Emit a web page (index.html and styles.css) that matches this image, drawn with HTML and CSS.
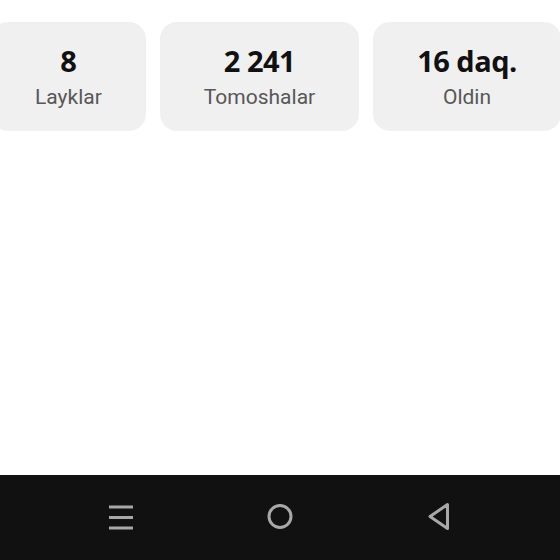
FILE: index.html
```html
<!DOCTYPE html>
<html>
<head>
<meta charset="utf-8">
<link rel="stylesheet" href="styles.css">
</head>
<body>
<div class="screen">
  <div class="stats">
    <div class="card"><div class="num">8</div><div class="label">Layklar</div></div>
    <div class="card"><div class="num">2 241</div><div class="label">Tomoshalar</div></div>
    <div class="card"><div class="num">16 daq.</div><div class="label">Oldin</div></div>
  </div>
  <div class="spacer"></div>
  <div class="navbar">
    <svg class="ico" width="30" height="30" viewBox="0 0 30 30"><g stroke="#a8a8a8" stroke-width="3"><line x1="3" y1="6" x2="27" y2="6"/><line x1="3" y1="16.5" x2="27" y2="16.5"/><line x1="3" y1="27" x2="27" y2="27"/></g></svg>
    <svg class="ico" width="30" height="30" viewBox="0 0 30 30"><circle cx="15" cy="15.5" r="11" fill="none" stroke="#a8a8a8" stroke-width="3"/></svg>
    <svg class="ico" width="30" height="30" viewBox="0 0 30 30"><path d="M23.5 3.5 L23.5 27.5 L6 15.5 Z" fill="none" stroke="#a8a8a8" stroke-width="3" stroke-linejoin="round"/></svg>
  </div>
</div>
</body>
</html>
```
FILE: styles.css
```css
html, body { margin: 0; padding: 0; background: #fff; }
.screen { width: 560px; height: 560px; display: flex; flex-direction: column; overflow: hidden; }
.stats { display: flex; gap: 14px; margin-top: 22px; margin-left: -9px; }
.card { flex: none; background: #f0f0f0; border-radius: 17px; height: 109px; padding: 21px 44px 0; box-sizing: border-box; display: flex; flex-direction: column; align-items: center; }
.num { font-family: "Open Sans", sans-serif; font-weight: 700; font-size: 29px; letter-spacing: -0.5px; line-height: 36px; color: #111; }
.label { font-family: Roboto, sans-serif; font-size: 21px; line-height: 26px; color: #575757; margin-top: 5px; }
.spacer { flex: 1; }
.navbar { height: 85px; background: #111111; display: flex; align-items: center; justify-content: space-between; padding: 0 106px 0 106px; box-sizing: border-box; }
.ico { display: block; margin-top: -3px; }
```
